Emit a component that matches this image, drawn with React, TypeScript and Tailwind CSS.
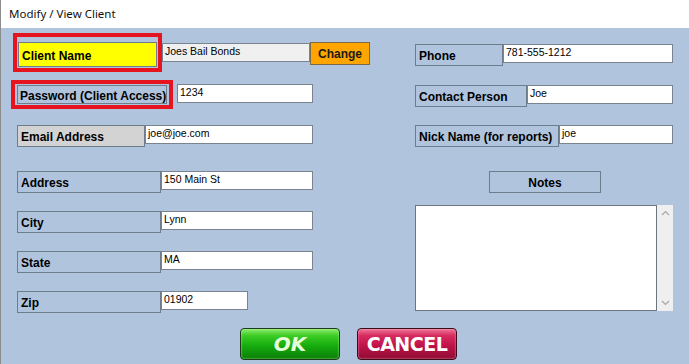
import React from 'react'

const font = { fontFamily: '"Liberation Sans", Arial, sans-serif' }

function Label({ text, className = '' }: { text: string; className?: string }) {
  return (
    <div
      className={`flex items-center whitespace-nowrap border border-[#6e7d8e] px-[3px] pt-[2px] text-[12px] font-bold text-black ${className}`}
    >
      {text}
    </div>
  )
}

function Field({ value, className = '' }: { value: string; className?: string }) {
  return (
    <div
      className={`h-[19px] border border-[#7a8390] px-[2px] text-[10.5px] leading-[15px] text-black ${className}`}
    >
      {value}
    </div>
  )
}

function Chevron({ up }: { up?: boolean }) {
  return (
    <svg width="9" height="6" viewBox="0 0 9 6">
      <path
        d={up ? 'M1 5 L4.5 1.5 L8 5' : 'M1 1 L4.5 4.5 L8 1'}
        fill="none"
        stroke="#a6a6a6"
        strokeWidth="1.2"
      />
    </svg>
  )
}

export default function App() {
  return (
    <div className="flex h-[364px] w-[689px] flex-col overflow-hidden border-l border-[#8c8c8c]" style={font}>
      {/* Title bar */}
      <div
        className="flex h-[28px] items-center bg-white pl-[8px] text-[11.5px] text-[#111]"
        style={{ fontFamily: '"Noto Sans", "Open Sans", sans-serif' }}
      >
        Modify / View Client
      </div>

      {/* Body */}
      <div className="flex flex-1 flex-col bg-[#b0c4de]">
        <div className="flex">
          {/* Left column */}
          <div className="flex w-[404px] flex-col pl-[10px]">
            <div className="mt-[5px] flex items-start">
              <div className="ml-[2px] h-[39px] w-[149px] border-[4px] border-[#e5141f] pl-[1px] pt-[5px]">
                <Label text="Client Name" className="h-[25px] w-[139px] bg-[#ffff00]" />
              </div>
              <Field value="Joes Bail Bonds" className="mt-[10px] w-[148px] bg-[#f0f0f0]" />
              <div className="mt-[9px] flex h-[23px] w-[60px] items-center justify-center border border-[#7b6a4c] bg-[#ffa500] pt-[1px] text-[12px] font-bold text-[#1a1a1a]">
                Change
              </div>
            </div>

            <div className="mt-[8px] flex items-start">
              <div className="h-[29px] w-[162px] border-[4px] border-[#e5141f] pl-[2px] pt-[1px]">
                <Label text="Password (Client Access)" className="h-[19px] w-[150px] overflow-hidden !px-[2px]" />
              </div>
              <Field value="1234" className="ml-[4px] mt-[4px] w-[136px] bg-white" />
            </div>

            <div className="mt-[16px] flex items-start pl-[6px]">
              <Label text="Email Address" className="h-[22px] w-[128px] bg-[#d3d3d3]" />
              <Field value="joe@joe.com" className="w-[168px] bg-white" />
            </div>

            {[
              ['Address', '150 Main St', 'mt-[24px]'],
              ['City', 'Lynn', 'mt-[18px]'],
              ['State', 'MA', 'mt-[18px]'],
            ].map(([l, v, m]) => (
              <div key={l} className={`${m} flex items-start pl-[6px]`}>
                <Label text={l} className="h-[22px] w-[144px]" />
                <Field value={v} className="w-[152px] bg-white" />
              </div>
            ))}

            <div className="mt-[18px] flex items-start pl-[6px]">
              <Label text="Zip" className="h-[22px] w-[144px]" />
              <Field value="01902" className="w-[87px] bg-white" />
            </div>
          </div>

          {/* Right column */}
          <div className="flex flex-col pl-[10px]">
            <div className="mt-[16px] flex items-start">
              <Label text="Phone" className="h-[22px] w-[88px]" />
              <Field value="781-555-1212" className="w-[170px] bg-white" />
            </div>
            <div className="mt-[19px] flex items-start">
              <Label text="Contact Person" className="h-[22px] w-[112px]" />
              <Field value="Joe" className="w-[146px] bg-white" />
            </div>
            <div className="mt-[18px] flex items-start">
              <Label text="Nick Name (for reports)" className="h-[22px] w-[144px]" />
              <Field value="joe" className="w-[114px] bg-white" />
            </div>
            <Label text="Notes" className="ml-[74px] mt-[24px] h-[22px] w-[112px] justify-center" />
            <div className="mt-[12px] flex h-[106px]">
              <div className="w-[242px] border border-[#6d7580] bg-white" />
              <div className="flex w-[16px] flex-col items-center justify-between bg-[#efefef] py-[5px]">
                <Chevron up />
                <Chevron />
              </div>
            </div>
          </div>
        </div>

        {/* Buttons */}
        <div className="mt-[15px] flex gap-[17px] pl-[239px]" style={{ fontFamily: '"DejaVu Sans", sans-serif' }}>
          <div className="flex h-[32px] w-[100px] items-center justify-center rounded-[4px] border border-[#1e3a1a] bg-[linear-gradient(#8cec70_0%,#3dcc24_22%,#16ad0e_55%,#0b7d08_100%)] text-[20px] font-bold italic text-[#e6ffd9] shadow-[inset_0_0_2px_#b8ff9a]">
            OK
          </div>
          <div className="flex h-[32px] w-[100px] items-center justify-center rounded-[4px] border border-[#3a0d18] bg-[linear-gradient(#ee7598_0%,#d62c60_22%,#c0134a_55%,#8f0b34_100%)] text-[19px] font-bold tracking-[-0.5px] text-white shadow-[inset_0_0_2px_#ffb0c8]">
            CANCEL
          </div>
        </div>
      </div>
    </div>
  )
}
